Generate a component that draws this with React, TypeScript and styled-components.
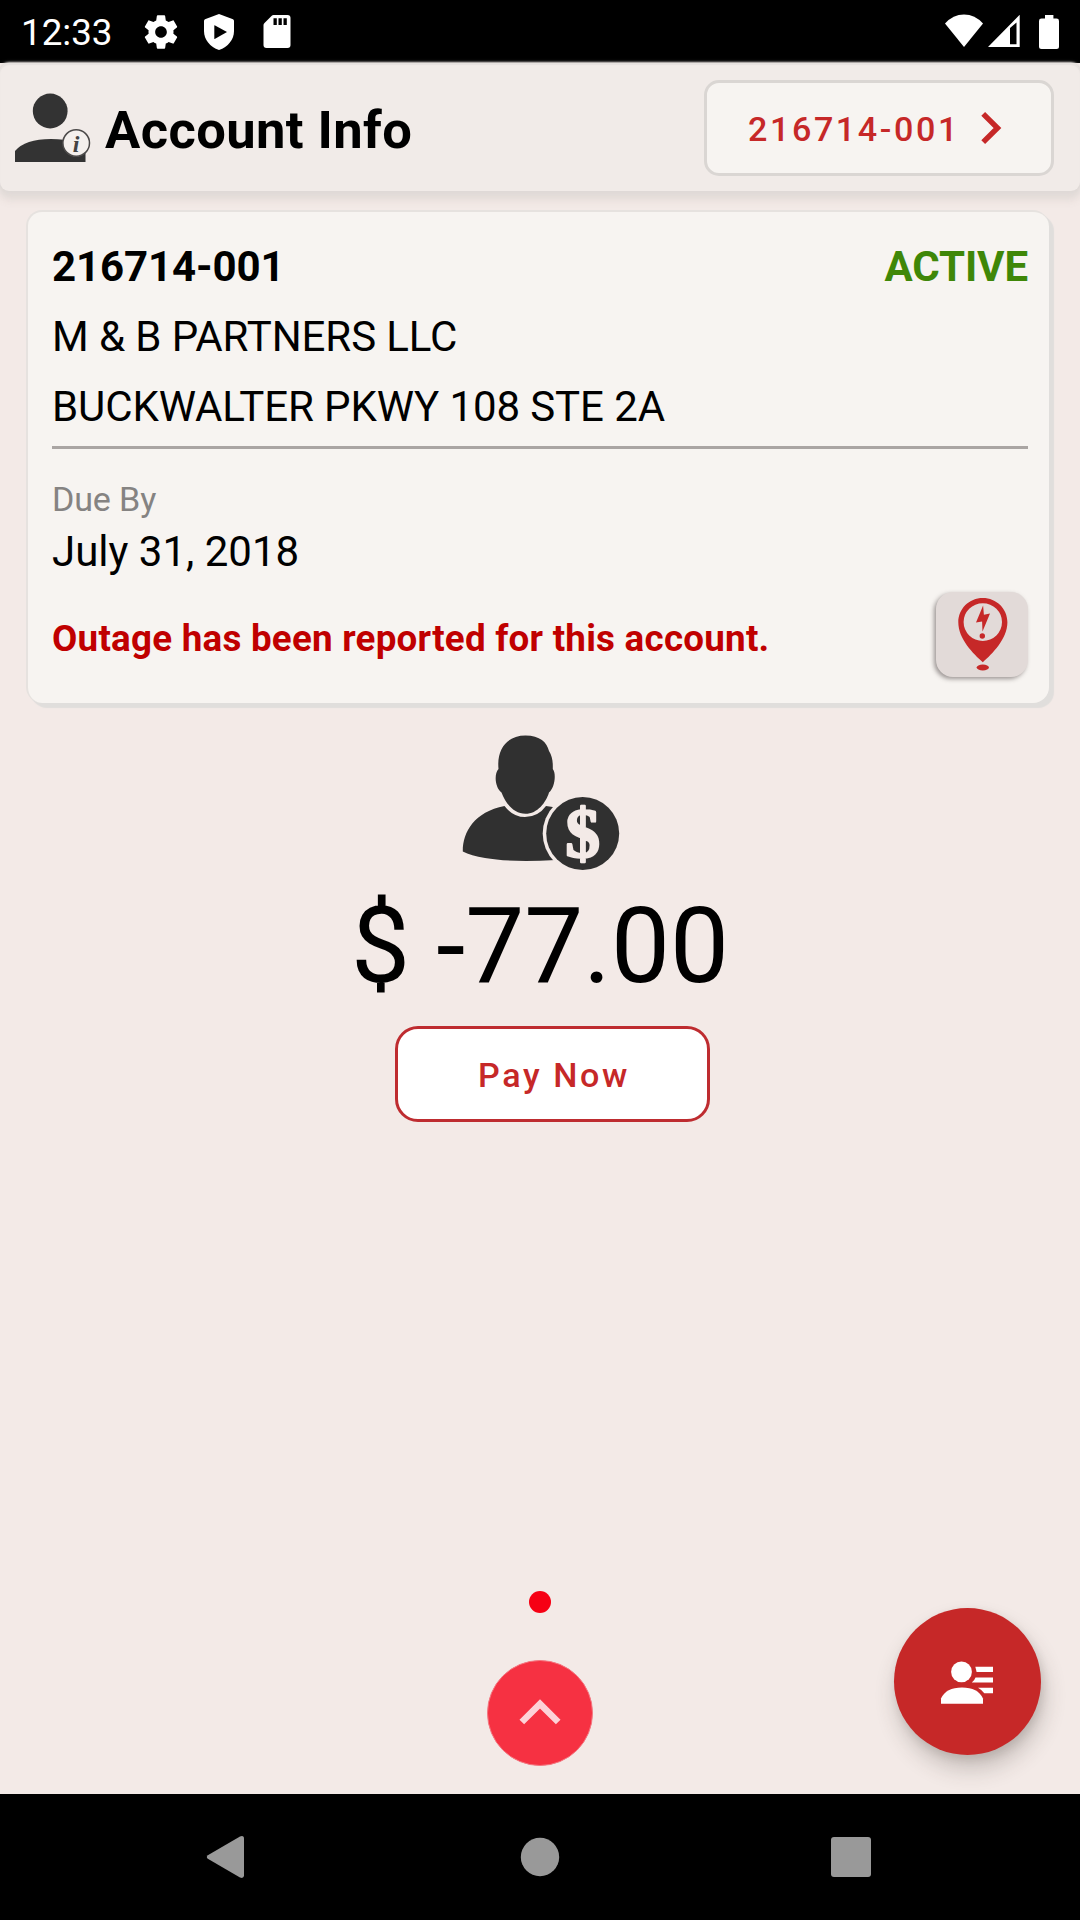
import React from "react";
import styled, { createGlobalStyle } from "styled-components";

const color = {
  page: "#f3eae7",
  header: "#f1ebe8",
  card: "#f7f4f1",
  red: "#c62828",
  ink: "#303030",
  nav: "#999999",
};

const GlobalStyle = createGlobalStyle`
  * { box-sizing: border-box; }
  body { margin: 0; background: ${color.page}; }
  svg { display: block; flex: none; overflow: visible; }
`;

const Screen = styled.div`
  position: relative;
  display: flex;
  flex-direction: column;
  width: 1080px;
  height: 1920px;
  overflow: hidden;
  background: ${color.page};
  color: #000;
  font-family: Roboto, "Liberation Sans", sans-serif;
`;

const StatusBar = styled.div`
  display: flex;
  align-items: center;
  justify-content: space-between;
  height: 63px;
  padding: 0 21px;
  background: #000;
  color: #fff;
`;

const StatusGroup = styled.div<{ $gap?: number }>`
  display: flex;
  align-items: center;
  gap: ${(p) => p.$gap ?? 0}px;
`;

const Clock = styled.span`
  width: 111px;
  padding-top: 3px;
  font-size: 36.75px;
  line-height: 44px;
`;

const StatusSlot = styled.span`
  display: flex;
  justify-content: center;
  width: 58px;
`;

const Header = styled.header`
  display: flex;
  align-items: center;
  height: 128px;
  padding: 2px 26px 0 15px;
  background: ${color.header};
  border-radius: 9px;
  box-shadow: inset 0 2px 1px #e7e2df, 0 0 2px 1px #dfdad7, 0 4px 6px 1px #dfdad7,
    0 10px 9px rgba(120, 110, 100, 0.09);
`;

const Title = styled.h1`
  flex: 1;
  margin: 0;
  padding: 3px 0 0 15px;
  font-size: 52.5px;
  line-height: 62px;
  font-weight: 700;
  letter-spacing: 0.4px;
`;

const OutlineButton = styled.button<{ $tone: "muted" | "red" }>`
  display: flex;
  align-items: center;
  justify-content: center;
  height: 96px;
  margin: 0;
  border: 3px solid ${(p) => (p.$tone === "red" ? "#be2c30" : "#dad6d3")};
  border-radius: ${(p) => (p.$tone === "red" ? 23 : 15)}px;
  background: ${(p) => (p.$tone === "red" ? "#fff" : color.card)};
  color: ${color.red};
  font-family: inherit;
  font-size: 34.1px;
  line-height: 40px;
  font-weight: 500;
  letter-spacing: 2.6px;
`;

const AccountButton = styled(OutlineButton)`
  width: 350px;
  padding: 0 49px 0 41px;
  justify-content: space-between;
`;

const PayButton = styled(OutlineButton)`
  width: 315px;
  margin: 18px 0 0 25px;
  padding: 0 0 0 3px;
`;

const ButtonLabel = styled.span`
  padding-top: 2px;
`;

const Card = styled.section`
  display: flex;
  flex-direction: column;
  height: 493px;
  margin: 19px 31px 0 26px;
  padding: 20px 21px 0 24px;
  background: ${color.card};
  border: 2px solid #e6e2df;
  border-right: 0;
  border-bottom: 0;
  border-radius: 16px;
  box-shadow: 2px 2px 0 #e0dedc, 5px 5px 1px #e0dedc;
`;

const CardRow = styled.div`
  display: flex;
  justify-content: space-between;
  font-size: 42px;
  line-height: 70px;
  letter-spacing: -0.09px;
  white-space: nowrap;
`;

const Strong = styled.span<{ $color?: string }>`
  font-weight: 700;
  color: ${(p) => p.$color ?? "inherit"};
`;

const Divider = styled.hr`
  width: 100%;
  height: 3px;
  margin: 4px 0 26px;
  border: 0;
  background: #aaa5a3;
`;

const DueLabel = styled.div`
  color: #858382;
  font-size: 34.1px;
  line-height: 49px;
  letter-spacing: -0.15px;
`;

const DueDate = styled.div`
  padding-top: 1px;
  font-size: 42px;
  line-height: 54px;
`;

const OutageRow = styled.div`
  display: flex;
  align-items: center;
  justify-content: space-between;
  margin-top: 13px;
`;

const OutageText = styled.span`
  padding-top: 8px;
  color: #c00000;
  font-size: 36.75px;
  line-height: 50px;
  font-weight: 700;
  letter-spacing: 0.24px;
`;

const OutageButton = styled.button`
  display: flex;
  justify-content: center;
  width: 92px;
  height: 85px;
  padding: 5px 0 0 1px;
  border: 0;
  border-radius: 17px;
  background: #e2dad8;
  box-shadow: -2px 2px 4px rgba(70, 60, 60, 0.5);
`;

const Balance = styled.section`
  display: flex;
  flex: 1;
  flex-direction: column;
  align-items: center;
  padding-top: 32px;
`;

const BalanceIconWrap = styled.div`
  padding-left: 2px;
`;

const Amount = styled.div`
  margin-top: 14px;
  font-size: 105px;
  line-height: 123px;
  white-space: pre;
`;

const Pager = styled.div`
  display: flex;
  flex-direction: column;
  align-items: center;
  gap: 47px;
  padding-bottom: 28px;
`;

const PageDot = styled.span`
  width: 22px;
  height: 22px;
  border-radius: 50%;
  background: #f60014;
`;

const ExpandButton = styled.button`
  display: flex;
  align-items: center;
  justify-content: center;
  width: 106px;
  height: 106px;
  padding: 0 0 2px;
  border: 1px solid #f47680;
  border-radius: 50%;
  background: #f63142;
`;

const Fab = styled.button`
  position: absolute;
  right: 39px;
  bottom: 165px;
  display: flex;
  align-items: center;
  justify-content: center;
  width: 147px;
  height: 147px;
  padding: 2px 2px 0 0;
  border: 0;
  border-radius: 50%;
  background: ${color.red};
  box-shadow: 3px 14px 22px rgba(60, 50, 45, 0.24), 2px 4px 8px rgba(60, 50, 45, 0.12);
`;

const NavBar = styled.nav`
  display: flex;
  align-items: center;
  justify-content: space-between;
  height: 126px;
  padding: 0 209px 0 206px;
  background: #000;
`;

const HomeSlot = styled.span`
  padding-left: 5px;
`;

const GearIcon = () => (
  <svg width="40" height="40" viewBox="0 0 24 24" fill="#fff">
    <path d="M19.43 12.98c.04-.32.07-.64.07-.98s-.03-.66-.07-.98l2.11-1.65c.19-.15.24-.42.12-.64l-2-3.46c-.12-.22-.39-.3-.61-.22l-2.49 1c-.52-.4-1.08-.73-1.69-.98l-.38-2.65C14.46 2.18 14.25 2 14 2h-4c-.25 0-.46.18-.49.42l-.38 2.65c-.61.25-1.17.59-1.69.98l-2.49-1c-.23-.09-.49 0-.61.22l-2 3.46c-.13.22-.07.49.12.64l2.11 1.65c-.04.32-.07.65-.07.98s.03.66.07.98l-2.11 1.65c-.19.15-.24.42-.12.64l2 3.46c.12.22.39.3.61.22l2.49-1c.52.4 1.08.73 1.69.98l.38 2.65c.03.24.24.42.49.42h4c.25 0 .46-.18.49-.42l.38-2.65c.61-.25 1.17-.59 1.69-.98l2.49 1c.23.09.49 0 .61-.22l2-3.46c.12-.22.07-.49-.12-.64l-2.11-1.65zM12 15.5c-1.93 0-3.5-1.57-3.5-3.5s1.57-3.5 3.5-3.5 3.5 1.57 3.5 3.5-1.57 3.5-3.5 3.5z" />
  </svg>
);

const ShieldIcon = () => (
  <svg width="30" height="36" viewBox="0 0 30 36">
    <path d="M15 0L29 5.2Q30 5.6 30 7V17C30 25.5 24 33 15 36C6 33 0 25.5 0 17V7Q0 5.6 1 5.2Z" fill="#fff" />
    <path d="M10.3 11.8v12.6q0 .8.8.4L23 18.1l-11.9-6.7q-.8-.4-.8.4z" fill="#000" />
  </svg>
);

const SdCardIcon = () => (
  <svg width="27" height="33" viewBox="0.5 0 27 33">
    <path d="M10 0H24Q27 0 27 3V30Q27 33 24 33H3Q0 33 0 30V10Q0 9 1 8L8 1Q9 0 10 0Z" fill="#fff" />
    <path d="M10 3.3h3.3V10H10zM15 3.3h3.3V10H15zM20 3.3h3.3V10H20z" fill="#000" />
  </svg>
);

const WifiIcon = () => (
  <svg width="38" height="34" viewBox="0 0 38 34" fill="#fff">
    <path d="M19 32L0 8.5Q8 -.5 19 -.5T38 8.5Z" />
  </svg>
);

const SignalIcon = () => (
  <svg width="32" height="33" viewBox="0 0 32 33" fill="#fff" fillRule="evenodd">
    <path d="M0 32L31.7 -.3V32ZM22 13V29.2H28.5V7.5Z" />
  </svg>
);

const BatteryIcon = () => (
  <svg width="20" height="34" viewBox="0 0 20 34" fill="#fff">
    <path d="M6 0h8.4v3.6H17.5Q20 3.6 20 6V31.5Q20 34 17.5 34H2.5Q0 34 0 31.5V6Q0 3.6 2.5 3.6H6Z" />
  </svg>
);

const AccountInfoIcon = () => (
  <svg width="75" height="70" viewBox="15 92.5 75 70">
    <circle cx="50.2" cy="110.5" r="17.4" fill="#333" />
    <path d="M15 161.5V150.5Q25 138.5 51 138.5Q79 138.5 85.5 152V161.5Z" fill="#333" />
    <circle cx="76.2" cy="142.5" r="13.3" fill="#f4f0ed" stroke="#4c4a49" strokeWidth="1.5" />
    <text
      x="76"
      y="151"
      fill="#444"
      textAnchor="middle"
      fontFamily="Liberation Serif, serif"
      fontStyle="italic"
      fontWeight="700"
      fontSize="24"
    >
      i
    </text>
  </svg>
);

const ChevronRightIcon = () => (
  <svg width="21" height="32" viewBox="0 0 21 32" fill="none" stroke={color.red} strokeWidth="5.4">
    <path d="M2.2 1.8L16.5 16L2.2 30.2" />
  </svg>
);

const OutagePinIcon = () => (
  <svg width="50" height="74" viewBox="957.5 597 50 74" fill={color.red}>
    <path
      fillRule="evenodd"
      d="M982.3 598C968.6 598 957.8 608.8 957.8 622.3C957.8 639 973 654 982.3 662.3C991.6 654 1006.9 639 1006.9 622.3C1006.9 608.8 996 598 982.3 598ZM982.3 603.2a19.2 18.9 0 1 1 0 37.8a19.2 18.9 0 1 1 0-37.8Z"
    />
    <path d="M982.6 605.5L975.5 622.4L981.6 621.5L982 631.5L989.5 613.6L983.4 614.8Z" />
    <circle cx="981.8" cy="636" r="2.7" />
    <ellipse cx="982.3" cy="667.5" rx="6.2" ry="2.9" />
  </svg>
);

const AccountBalanceIcon = () => (
  <svg width="158" height="136" viewBox="462 735.5 158 136">
    <path
      fill={color.ink}
      d="M462.8 852C462.5 833 474 812.5 504.5 806.5Q513 817.5 525 817.5Q538 817.5 546 806.5L556 808V860.5Q510 863 485 858.5Q471 856 462.8 852Z"
    />
    <path
      fill={color.ink}
      d="M525.5 736C540 736 547 743 549 751.5C552.3 757 553 762 552.8 769.5C556.5 774 554.8 788 549 793C546 803 537.5 814.3 525.5 814.3C513.5 814.3 505.5 803.5 501.5 793C495 788 493.8 774.5 498.5 769.5C496.5 749 507.5 736 525.5 736Z"
    />
    <circle cx="582.7" cy="834" r="40" fill={color.page} />
    <circle cx="582.7" cy="834" r="36.5" fill={color.ink} />
    <text
      x="582.8"
      y="857"
      fill={color.page}
      stroke={color.page}
      strokeWidth="2.4"
      strokeLinejoin="round"
      textAnchor="middle"
      fontFamily="Liberation Serif, serif"
      fontWeight="700"
      fontSize="69"
    >
      $
    </text>
  </svg>
);

const ChevronUpIcon = () => (
  <svg width="42" height="28" viewBox="0 0 42 28" fill="none" stroke="#fdd2d7" strokeWidth="6.6">
    <path d="M2.8 24L21 6L39.2 24" />
  </svg>
);

const ContactListIcon = () => (
  <svg width="52" height="43" viewBox="941 1661.5 52 43" fill="#fff">
    <circle cx="961.5" cy="1672.4" r="10.4" />
    <path d="M941 1704.2V1699Q946 1688 962 1688T983 1699V1704.2Z" />
    <path d="M975.3 1667.2H993V1672.4H976.6Z" />
    <path d="M975.5 1678H993V1683H971.8Q974.5 1681 975.5 1678Z" />
    <path d="M978 1688.3H993V1693.8H984.3Q982 1690.5 978 1688.3Z" />
  </svg>
);

const BackIcon = () => (
  <svg width="38" height="42" viewBox="0 0 38 42" fill={color.nav}>
    <path d="M1.8 19.2L34 .5Q38 -1 38 2.8V39.2Q38 43 34 41.5L1.8 22.8Q-.2 21 1.8 19.2Z" />
  </svg>
);

const HomeIcon = () => (
  <svg width="40" height="40" viewBox="0 0 40 40" fill={color.nav}>
    <circle cx="20" cy="20" r="19.2" />
  </svg>
);

const RecentsIcon = () => (
  <svg width="40" height="40" viewBox="0 0 40 40" fill={color.nav}>
    <rect width="40" height="40" rx="3" />
  </svg>
);

export default function App() {
  return (
    <>
      <GlobalStyle />
      <Screen>
        <StatusBar>
          <StatusGroup>
            <Clock>12:33</Clock>
            <StatusSlot><GearIcon /></StatusSlot>
            <StatusSlot><ShieldIcon /></StatusSlot>
            <StatusSlot><SdCardIcon /></StatusSlot>
          </StatusGroup>
          <StatusGroup $gap={19}>
            <StatusGroup $gap={5}>
              <WifiIcon />
              <SignalIcon />
            </StatusGroup>
            <BatteryIcon />
          </StatusGroup>
        </StatusBar>

        <Header>
          <AccountInfoIcon />
          <Title>Account Info</Title>
          <AccountButton $tone="muted">
            <ButtonLabel>216714-001</ButtonLabel>
            <ChevronRightIcon />
          </AccountButton>
        </Header>

        <Card>
          <CardRow>
            <Strong>216714-001</Strong>
            <Strong $color="#3f8708">ACTIVE</Strong>
          </CardRow>
          <CardRow>M &amp; B PARTNERS LLC</CardRow>
          <CardRow>BUCKWALTER PKWY 108 STE 2A</CardRow>
          <Divider />
          <DueLabel>Due By</DueLabel>
          <DueDate>July 31, 2018</DueDate>
          <OutageRow>
            <OutageText>Outage has been reported for this account.</OutageText>
            <OutageButton aria-label="Outage"><OutagePinIcon /></OutageButton>
          </OutageRow>
        </Card>

        <Balance>
          <BalanceIconWrap><AccountBalanceIcon /></BalanceIconWrap>
          <Amount>$ -77.00</Amount>
          <PayButton $tone="red">
            <ButtonLabel>Pay Now</ButtonLabel>
          </PayButton>
        </Balance>

        <Pager>
          <PageDot />
          <ExpandButton aria-label="Expand"><ChevronUpIcon /></ExpandButton>
        </Pager>

        <NavBar>
          <BackIcon />
          <HomeSlot><HomeIcon /></HomeSlot>
          <RecentsIcon />
        </NavBar>

        <Fab aria-label="Contacts"><ContactListIcon /></Fab>
      </Screen>
    </>
  );
}
